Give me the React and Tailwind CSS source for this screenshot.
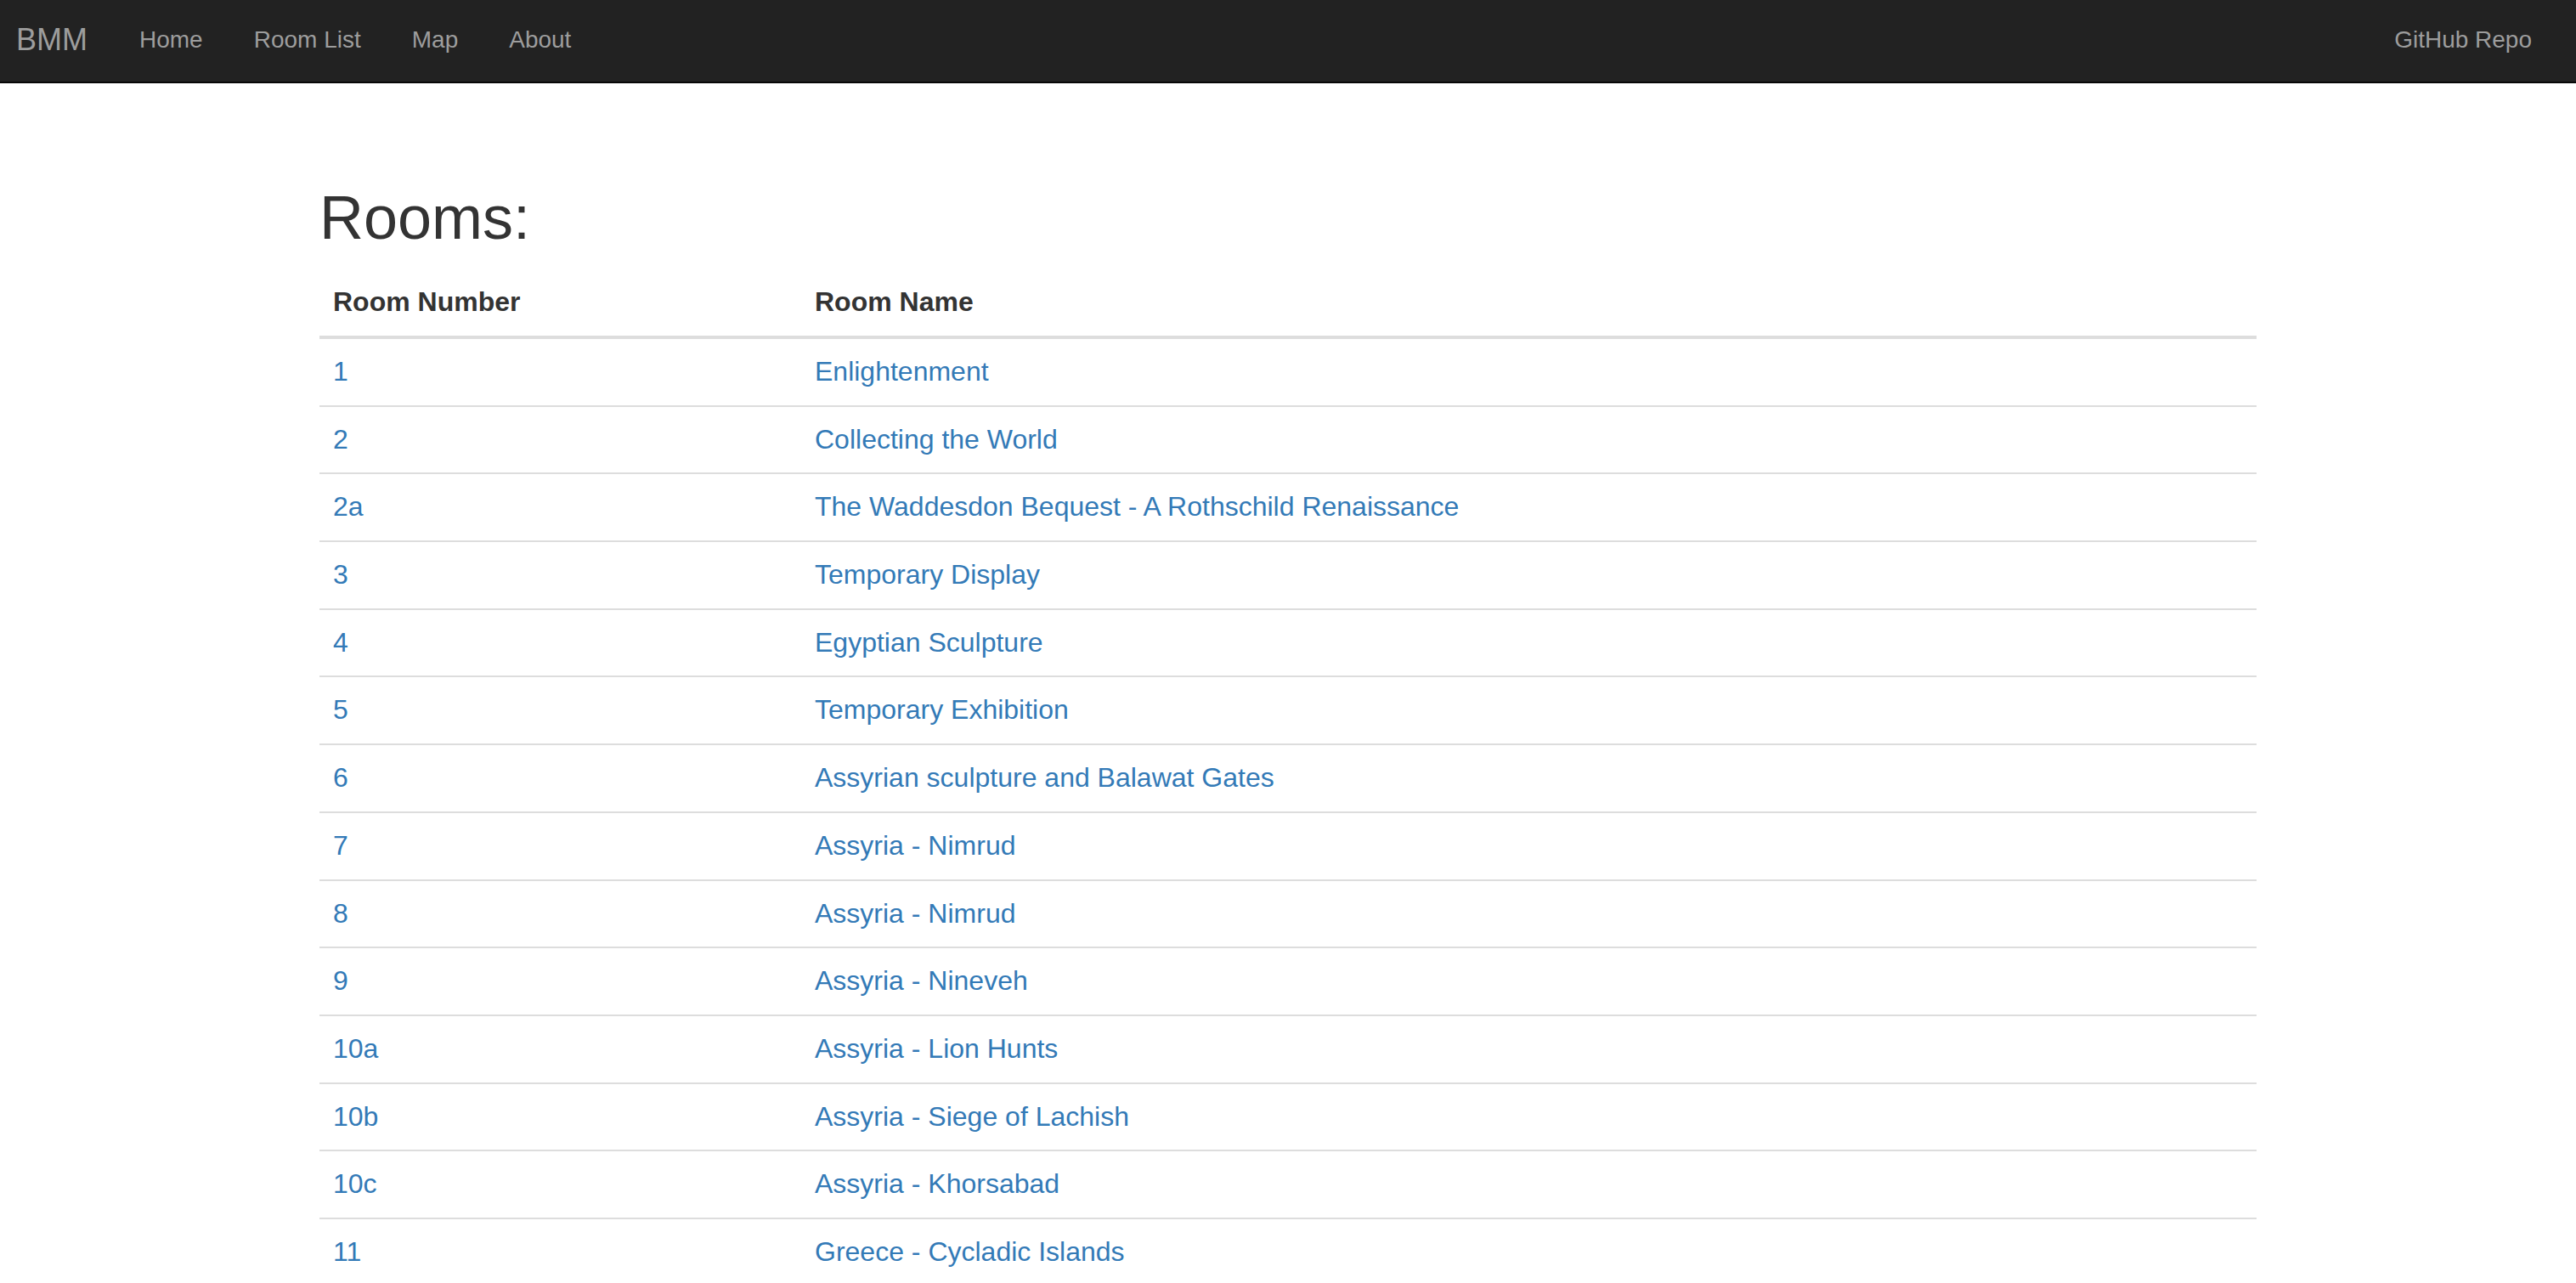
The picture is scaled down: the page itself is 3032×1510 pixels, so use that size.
import React from "react";

const rooms = [
  ["1", "Enlightenment"],
  ["2", "Collecting the World"],
  ["2a", "The Waddesdon Bequest - A Rothschild Renaissance"],
  ["3", "Temporary Display"],
  ["4", "Egyptian Sculpture"],
  ["5", "Temporary Exhibition"],
  ["6", "Assyrian sculpture and Balawat Gates"],
  ["7", "Assyria - Nimrud"],
  ["8", "Assyria - Nimrud"],
  ["9", "Assyria - Nineveh"],
  ["10a", "Assyria - Lion Hunts"],
  ["10b", "Assyria - Siege of Lachish"],
  ["10c", "Assyria - Khorsabad"],
  ["11", "Greece - Cycladic Islands"],
];

export default function App() {
  return (
    <div className="min-h-screen bg-white text-[#333] font-['Liberation_Sans',Arial,sans-serif]">
      <nav className="flex h-[98px] items-center justify-between border-b-2 border-[#080808] bg-[#222] pb-[2px]">
        <div className="flex items-center">
          <a href="#" className="pl-[19px] pr-[31px] text-[36px] leading-[40px] text-[#9d9d9d]">
            BMM
          </a>
          {["Home", "Room List", "Map", "About"].map((l) => (
            <a key={l} href="#" className="px-[30px] text-[28px] leading-[40px] text-[#9d9d9d]">
              {l}
            </a>
          ))}
        </div>
        <div className="pr-[22px]">
          <a href="#" className="px-[30px] text-[28px] leading-[40px] text-[#9d9d9d]">
            GitHub Repo
          </a>
        </div>
      </nav>
      <main className="mx-auto w-[2280px]">
        <h1 className="mt-[119px] mb-[21px] text-[72px] leading-[79.2px] font-normal text-[#333]">
          Rooms:
        </h1>
        <div className="text-[32px] leading-[45.71px]">
          <div className="flex border-b-4 border-[#ddd] font-bold text-[#333]">
            <div className="w-[567px] px-[16px] py-[16px]">Room Number</div>
            <div className="flex-1 px-[16px] py-[16px]">Room Name</div>
          </div>
          {rooms.map(([n, name], i) => (
            <div
              key={i}
              className={i === 0 ? "flex" : "flex border-t-2 border-[#ddd]"}
            >
              <div className="w-[567px] px-[16px] py-[16px]">
                <a href="#" className="text-[#337ab7]">{n}</a>
              </div>
              <div className="flex-1 px-[16px] py-[16px]">
                <a href="#" className="text-[#337ab7]">{name}</a>
              </div>
            </div>
          ))}
        </div>
      </main>
    </div>
  );
}
